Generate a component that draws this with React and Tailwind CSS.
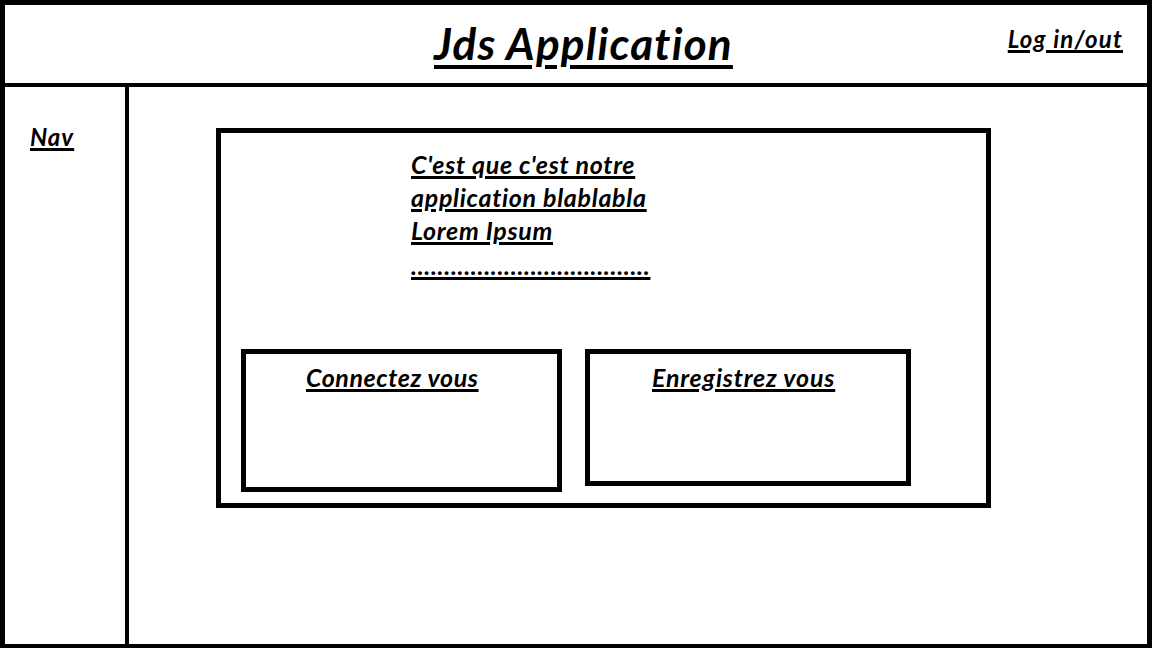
import React from 'react';

const font = { fontFamily: 'Lato, "Open Sans", sans-serif' };

const Label = ({ children, className = '' }) => (
  <span
    className={`font-bold italic text-black underline decoration-[3px] underline-offset-[2px] [font-variant-ligatures:none] ${className}`}
  >
    {children}
  </span>
);

const ActionBox = ({ title, className, textClass }) => (
  <div className={`border-[5px] border-black bg-white ${className}`}>
    <div className={`text-[25px] leading-[33px] tracking-[0.6px] ${textClass}`}>
      <Label>{title}</Label>
    </div>
  </div>
);

export default function App() {
  return (
    <div
      className="w-[1152px] h-[648px] bg-white flex flex-col border-t-[5px] border-l-[5px] border-r-[5px] border-b-[4px] border-black overflow-hidden"
      style={font}
    >
      {/* header */}
      <header className="h-[82px] shrink-0 flex items-start border-b-[4px] border-black">
        <h1 className="ml-[429px] mt-[14px] text-[44px] leading-[48px] tracking-[1.2px]">
          <Label className="decoration-[4px] underline-offset-[5px]">Jds Application</Label>
        </h1>
        <a className="ml-auto mr-[24px] mt-[21px] text-[24px] leading-[26px] tracking-[1.2px]">
          <Label className="underline-offset-[1px]">Log in/out</Label>
        </a>
      </header>

      <div className="flex flex-1 min-h-0">
        {/* sidebar */}
        <nav className="w-[124px] shrink-0 border-r-[4px] border-black pl-[25px] pt-[37px]">
          <div className="text-[24px] leading-[26px] tracking-[1px]">
            <Label className="underline-offset-[1px]">Nav</Label>
          </div>
        </nav>

        {/* main */}
        <main className="flex-1 pl-[87px] pt-[41px]">
          <section className="w-[775px] h-[380px] border-[5px] border-black flex flex-col">
            <div className="pl-[190px] pt-[15px] text-[25px] leading-[33px] tracking-[0.7px] flex flex-col items-start">
              <Label>C'est que c'est notre</Label>
              <Label>application blablabla</Label>
              <Label>Lorem Ipsum</Label>
              <Label className="mt-[2px]">....................................</Label>
            </div>

            <div className="flex items-start gap-[23px] pl-[20px] mt-auto mb-[11px]">
              <ActionBox title="Connectez vous" className="w-[321px] h-[143px]" textClass="pl-[60px] pt-[7px]" />
              <ActionBox title="Enregistrez vous" className="w-[326px] h-[137px]" textClass="pl-[62px] pt-[7px] tracking-[0.8px]" />
            </div>
          </section>
        </main>
      </div>
    </div>
  );
}
